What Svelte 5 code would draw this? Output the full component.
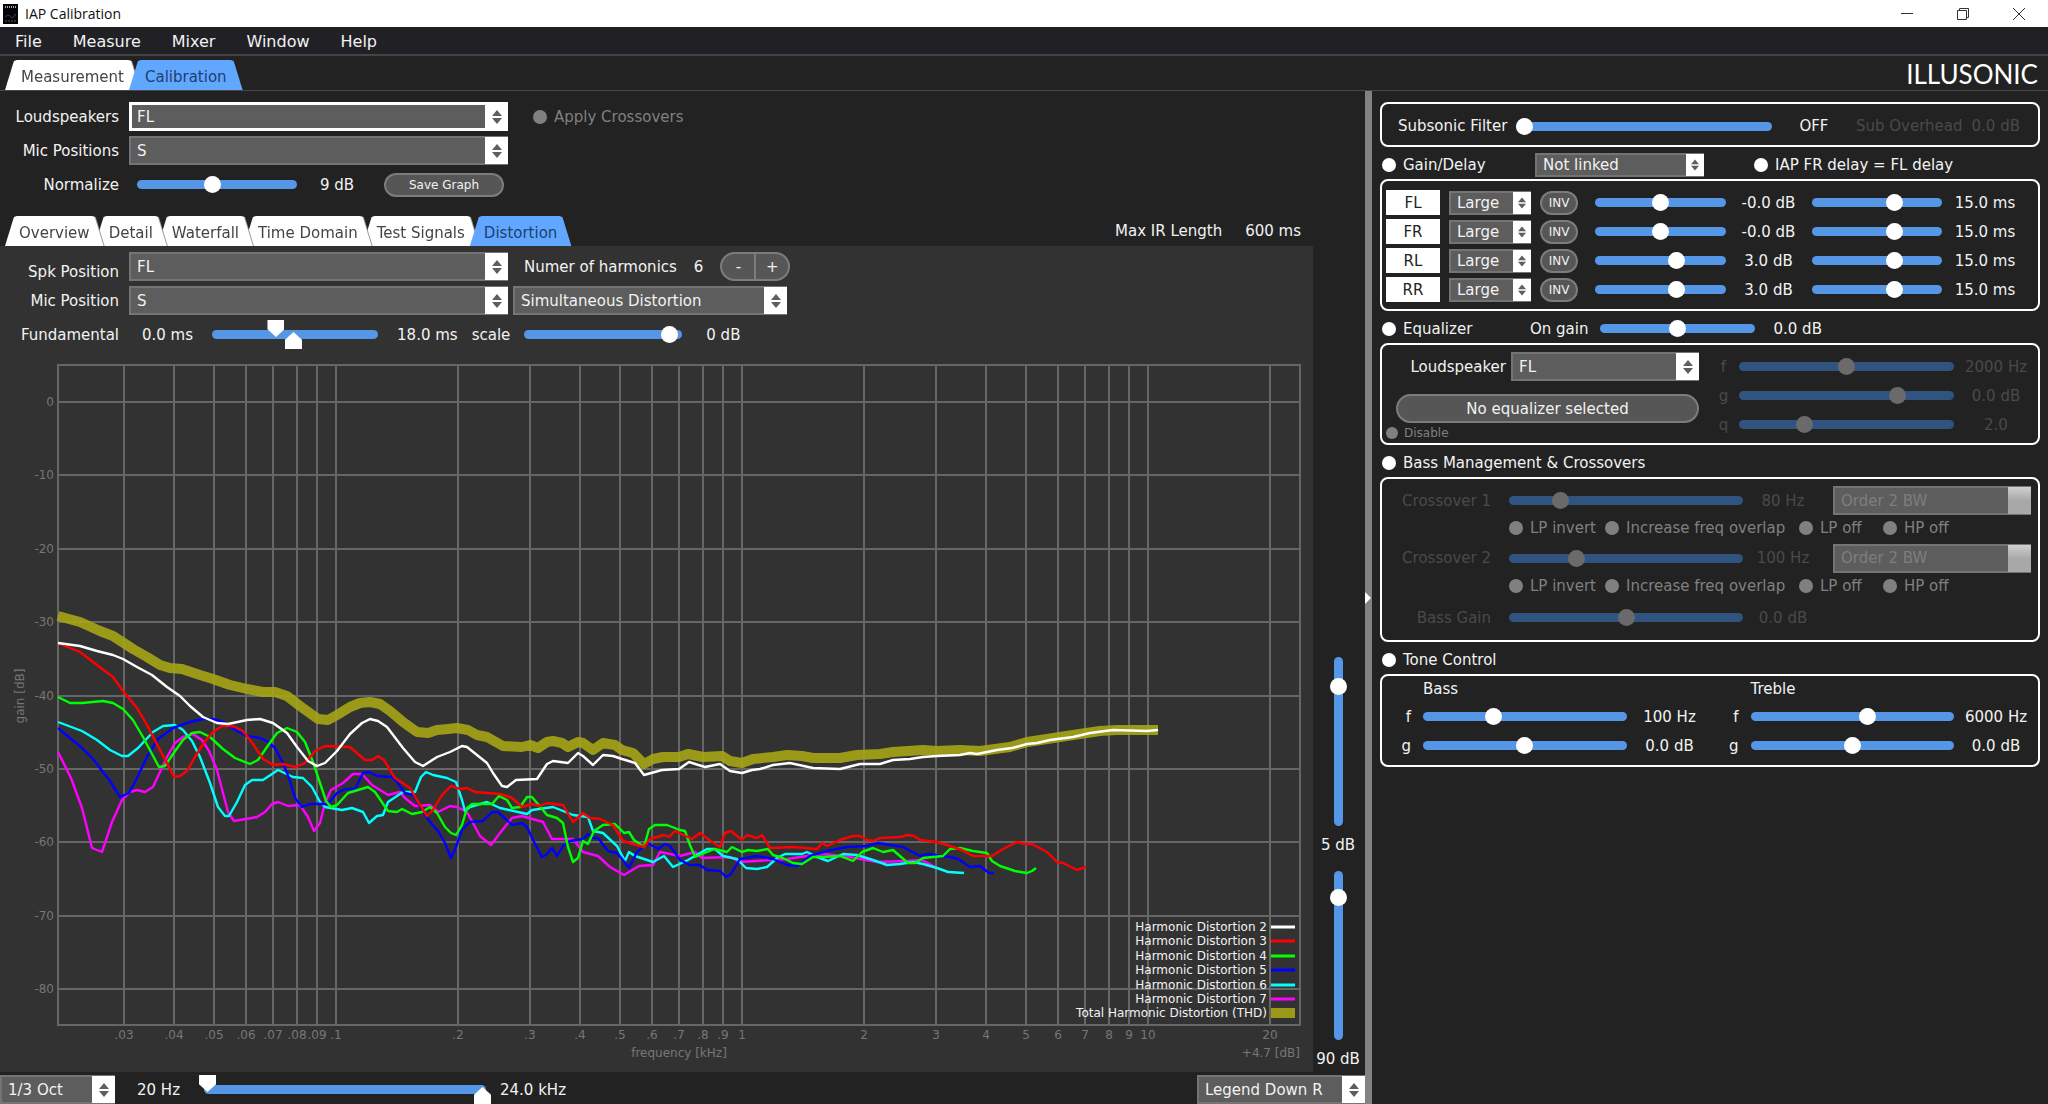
<script lang="ts">
  type Series = { name: string; color: string; points: string };

  const menu = ['File', 'Measure', 'Mixer', 'Window', 'Help'];
  const mainTabs = ['Measurement', 'Calibration'];
  const viewTabs = ['Overview', 'Detail', 'Waterfall', 'Time Domain', 'Test Signals', 'Distortion'];

  let mainTab = $state('Calibration');
  let viewTab = $state('Distortion');
  let harmonics = $state(6);

  const channels = [
    { name: 'FL', gain: 50, gainText: '-0.0 dB', delay: 66, delayText: '15.0 ms' },
    { name: 'FR', gain: 50, gainText: '-0.0 dB', delay: 66, delayText: '15.0 ms' },
    { name: 'RL', gain: 64, gainText: '3.0 dB', delay: 66, delayText: '15.0 ms' },
    { name: 'RR', gain: 64, gainText: '3.0 dB', delay: 66, delayText: '15.0 ms' },
  ];

  const eqParams = [
    { name: 'f', value: 50, text: '2000 Hz' },
    { name: 'g', value: 76, text: '0.0 dB' },
    { name: 'q', value: 29, text: '2.0' },
  ];

  const crossovers = [
    { name: 'Crossover 1', value: 20, text: '80 Hz' },
    { name: 'Crossover 2', value: 27, text: '100 Hz' },
  ];
  const crossoverFlags = ['LP invert', 'Increase freq overlap', 'LP off', 'HP off'];

  const tone = [
    { name: 'f', bass: 33, bassText: '100 Hz', treble: 58, trebleText: '6000 Hz' },
    { name: 'g', bass: 50, bassText: '0.0 dB', treble: 50, trebleText: '0.0 dB' },
  ];

  // Plot area in svg units
  const plot = { left: 58, right: 1300, top: 365, bottom: 1025 };
  const freqX = (khz: number) => Math.round(336 + 406 * Math.log10(khz / 0.1));
  const gainY = (db: number) => Math.round(402 - 7.34 * db);

  const freqs = [
    0.03, 0.04, 0.05, 0.06, 0.07, 0.08, 0.09, 0.1, 0.2, 0.3, 0.4, 0.5, 0.6, 0.7, 0.8, 0.9,
    1, 2, 3, 4, 5, 6, 7, 8, 9, 10, 20,
  ];
  const gains = [0, -10, -20, -30, -40, -50, -60, -70, -80];
  const freqLabel = (khz: number) => String(khz).replace(/^0/, '');

  const thd =
    '58,616 80,622 100,631 113,636 133,649 147,657 160,665 170,668 182,669 200,675 213,679 230,685 247,689 263,692 275,692 287,696 300,706 318,719 328,720 337,715 350,707 360,703 370,702 380,704 390,711 403,722 417,732 428,733 437,730 448,729 457,728 468,730 477,735 487,737 503,746 522,747 530,745 538,748 547,742 553,741 562,743 568,747 578,742 583,743 593,750 603,743 615,745 622,750 633,753 644,764 653,759 663,757 679,757 688,754 703,757 722,756 730,761 742,763 753,759 773,757 787,755 802,756 813,758 840,758 857,755 880,754 893,752 923,750 937,751 960,750 980,751 1010,747 1027,742 1047,739 1073,735 1100,731 1117,730 1140,730 1158,730';

  const series: Series[] = [
    {
      name: 'Harmonic Distortion 2',
      color: '#ffffff',
      points:
        '58,643 80,646 97,651 113,655 123,659 137,667 152,675 167,687 180,696 190,706 203,717 217,723 228,724 247,720 260,719 273,723 287,733 297,747 308,761 317,766 325,763 337,751 350,734 362,723 370,719 378,721 387,727 403,748 415,762 423,766 437,757 450,752 462,746 467,747 477,755 487,763 493,773 502,786 507,787 516,780 537,779 547,764 553,761 568,763 578,753 583,756 593,765 603,755 613,756 622,759 635,763 644,775 662,770 679,769 689,762 705,767 720,764 730,771 742,773 752,770 760,769 773,765 790,763 813,768 840,769 860,764 880,764 893,760 910,759 923,757 937,756 960,755 970,753 977,754 997,750 1012,748 1027,744 1037,743 1050,740 1073,737 1090,733 1113,730 1147,731 1158,730',
    },
    {
      name: 'Harmonic Distortion 3',
      color: '#ff0000',
      points:
        '58,643 80,652 97,665 113,677 123,691 137,708 147,725 160,750 167,763 174,777 180,776 187,771 195,757 203,744 213,732 222,726 233,726 243,731 253,744 263,759 273,765 283,764 295,767 305,763 315,751 325,746 350,747 365,760 372,760 378,756 384,760 395,778 410,788 418,802 427,816 433,810 442,795 451,786 460,789 467,788 475,792 500,794 512,798 522,807 532,804 540,806 547,803 563,805 573,822 583,813 590,818 600,819 613,825 623,841 633,844 644,847 650,839 664,835 669,837 675,831 692,839 700,833 712,842 720,847 725,833 731,831 742,840 747,835 757,838 762,835 770,848 793,847 817,849 822,843 827,846 840,840 853,836 860,836 867,840 873,841 880,838 900,837 908,835 914,836 920,840 937,842 950,846 962,850 973,856 992,856 1003,849 1017,842 1025,844 1032,844 1047,852 1057,862 1063,863 1077,870 1086,867',
    },
    {
      name: 'Harmonic Distortion 4',
      color: '#00ff00',
      points:
        '58,697 70,703 82,703 103,701 113,703 123,709 133,720 143,737 152,754 159,767 165,766 173,754 183,740 192,733 200,732 210,737 223,749 235,758 250,764 258,760 267,747 277,733 287,728 297,732 305,742 313,762 320,783 326,801 331,807 337,805 348,793 368,787 375,792 388,811 397,812 402,809 412,814 422,812 430,807 437,813 445,827 451,833 456,835 462,825 467,808 472,804 492,804 499,796 507,800 512,808 520,807 527,797 532,797 547,815 557,818 563,823 568,847 573,862 578,858 583,841 588,844 594,831 603,825 615,824 624,833 629,832 634,840 644,847 649,829 655,825 667,825 680,830 685,831 690,845 695,857 707,852 715,849 727,852 732,847 742,852 748,850 757,851 768,849 773,855 783,858 793,863 802,864 813,857 823,857 840,856 853,861 862,852 873,848 883,852 893,850 908,863 915,863 923,858 943,856 950,849 960,848 973,851 987,853 992,861 1000,866 1015,871 1027,873 1032,871 1036,868',
    },
    {
      name: 'Harmonic Distortion 5',
      color: '#0000ff',
      points:
        '58,728 70,738 82,748 93,759 110,781 120,797 129,793 137,778 147,757 158,739 173,728 190,722 203,719 213,719 223,722 237,731 247,736 260,738 267,741 275,748 283,763 289,778 295,798 302,807 310,804 328,804 337,793 345,789 355,789 363,773 369,772 377,776 392,777 397,782 405,793 413,795 422,810 430,822 438,831 445,843 451,858 456,847 462,830 470,822 483,821 492,812 498,812 512,825 522,823 527,827 533,840 542,857 547,854 552,848 557,856 563,846 570,841 583,839 588,834 593,838 598,838 608,851 617,853 623,860 629,868 637,852 648,843 658,849 665,844 670,846 680,860 690,865 700,865 707,870 720,871 726,877 731,874 740,859 757,856 773,859 787,865 797,866 805,860 810,856 827,851 847,847 867,846 878,843 903,847 920,856 928,854 950,857 958,859 970,867 980,866 989,873 994,873',
    },
    {
      name: 'Harmonic Distortion 6',
      color: '#00ffff',
      points:
        '58,722 82,731 97,740 110,750 122,756 128,756 138,748 153,732 163,726 175,725 183,730 192,741 200,757 210,783 218,807 225,816 229,816 237,802 245,785 252,780 263,780 278,770 293,777 303,778 312,787 320,802 325,807 342,810 352,808 363,812 369,823 377,816 383,815 388,802 403,792 415,792 421,777 426,772 433,775 447,778 456,782 462,800 465,811 470,807 487,802 500,808 527,814 532,810 553,807 573,815 588,817 593,831 603,833 617,846 625,861 629,852 635,856 653,862 664,856 673,867 688,860 707,849 715,849 723,856 737,859 746,868 757,869 767,867 777,858 785,854 802,854 807,852 817,857 828,861 843,854 857,855 873,860 887,865 900,864 913,862 923,864 937,868 948,872 964,873',
    },
    {
      name: 'Harmonic Distortion 7',
      color: '#ff00ff',
      points:
        '58,752 71,778 82,808 92,848 102,852 112,822 122,800 130,792 137,790 145,792 153,787 160,772 167,757 175,743 183,737 193,734 202,740 209,751 217,770 223,793 228,812 234,821 257,817 265,812 272,804 278,802 288,806 300,805 308,817 314,831 320,823 325,803 331,790 343,783 353,774 362,774 372,785 388,795 400,792 405,798 415,806 430,805 438,812 450,806 457,807 467,812 480,836 491,845 500,833 512,818 522,816 543,822 552,839 573,839 583,852 598,856 610,867 624,875 639,866 653,865 660,852 680,856 695,852 702,858 730,857 740,862 773,860 787,859 800,857 823,854 850,857 877,862 907,861 922,860 937,868',
    },
  ];
  const drawOrder = [...series].reverse();
  const legendY = (i: number) => Math.round(927 + 14.4 * i);
</script>

{#snippet dropdown(id: string, value: string, cls: string, disabled: boolean, label: string | undefined)}
  <span class="dropdown {cls}" class:disabled>
    <select {id} {disabled} aria-label={label}>
      <option>{value}</option>
    </select>
    <span class="stub">
      {#if !disabled}
        <svg width="10" height="14" viewBox="0 0 10 14" aria-hidden="true">
          <path d="M5 0 10 6H0zM5 14 0 8h10z" />
        </svg>
      {/if}
    </span>
  </span>
{/snippet}

{#snippet slider(label: string, value: number, cls = '', disabled = false)}
  <input type="range" class={cls} min="0" max="100" {value} {disabled} aria-label={label} />
{/snippet}

{#snippet rangePair(label: string, low: number, high: number, cls: string)}
  <span class="pair {cls}">
    <input type="range" class="from" min="0" max="100" value={low} aria-label="{label} from" />
    <input type="range" class="to" min="0" max="100" value={high} aria-label="{label} to" />
  </span>
{/snippet}

{#snippet check(text: string, cls = '', disabled = false)}
  <label class="check {cls}" class:disabled>
    <input type="checkbox" {disabled} />
    <span>{text}</span>
  </label>
{/snippet}

{#snippet tab(name: string, i: number, active: boolean, onclick: () => void)}
  <button class="tab" class:active role="tab" aria-selected={active} style:z-index={active ? 10 : 9 - i} {onclick}>
    <span>{name}</span>
  </button>
{/snippet}

<div class="app">
  <header class="titlebar">
    <svg width="15" height="20" viewBox="0 0 15 20" aria-hidden="true">
      <rect width="15" height="20" fill="#050505" />
      <path d="M2 3h11" stroke="#aaa" stroke-dasharray="1 1" stroke-width="2" />
      <path d="M2 13c2-1 3-3 5-1s3 3 5-1l1-1" fill="none" stroke="#2a4a90" />
      <path d="M2 17h11" stroke="#555" stroke-dasharray="2 1" />
    </svg>
    <span class="title">IAP Calibration</span>
    <div class="window-buttons">
      <button aria-label="Minimize">
        <svg width="12" height="12" viewBox="0 0 12 12"><path d="M0 5.5h12" /></svg>
      </button>
      <button aria-label="Restore">
        <svg width="12" height="12" viewBox="0 0 12 12"><path d="M.5 2.500h9v9h-9zM2.500 2.500v-2h9v9h-2" /></svg>
      </button>
      <button aria-label="Close">
        <svg width="12" height="12" viewBox="0 0 12 12"><path d="M0 0l12 12M12 0 0 12" /></svg>
      </button>
    </div>
  </header>

  <nav class="menu">
    {#each menu as item}
      <button>{item}</button>
    {/each}
  </nav>

  <div class="topbar">
    <div class="tabs wide" role="tablist">
      {#each mainTabs as name, i}
        {@render tab(name, i, mainTab === name, () => (mainTab = name))}
      {/each}
    </div>
    <span class="brand">ILLUSONIC</span>
  </div>

  <div class="body">
    <main>
      <section class="form">
        <div class="row">
          <label class="name" for="loudspeakers">Loudspeakers</label>
          {@render dropdown('loudspeakers', 'FL', 'long focused', false, undefined)}
          {@render check('Apply Crossovers', 'apply', true)}
        </div>
        <div class="row">
          <label class="name" for="mic-positions">Mic Positions</label>
          {@render dropdown('mic-positions', 'S', 'long', false, undefined)}
        </div>
        <div class="row">
          <span class="name">Normalize</span>
          <span class="slot">
            {@render slider('Normalize', 47, 'w160')}
            <output class="norm">9 dB</output>
            <button class="pill save">Save Graph</button>
          </span>
        </div>
      </section>

      <div class="view-head">
        <div class="tabs" role="tablist">
          {#each viewTabs as name, i}
            {@render tab(name, i, viewTab === name, () => (viewTab = name))}
          {/each}
        </div>
        <span>Max IR Length</span>
        <output>600 ms</output>
      </div>

      <div class="view">
        <section class="panel">
          <div class="row">
            <label class="name low" for="spk-position">Spk Position</label>
            {@render dropdown('spk-position', 'FL', 'long', false, undefined)}
            <span class="harmonics">
              <span>Numer of harmonics</span>
              <output>{harmonics}</output>
              <span class="stepper">
                <button aria-label="Fewer harmonics" onclick={() => harmonics--}>-</button>
                <button aria-label="More harmonics" onclick={() => harmonics++}>+</button>
              </span>
            </span>
          </div>
          <div class="row">
            <label class="name" for="mic-position">Mic Position</label>
            {@render dropdown('mic-position', 'S', 'long', false, undefined)}
            {@render dropdown('mode', 'Simultaneous Distortion', 'mode', false, 'Distortion mode')}
          </div>
          <div class="row">
            <span class="name">Fundamental</span>
            <span class="fundamental">
              <output>0.0 ms</output>
              {@render rangePair('Fundamental', 38, 49, 'w176')}
              <output>18.0 ms</output>
              <span>scale</span>
              {@render slider('scale', 97, 'w160')}
              <output class="after">0 dB</output>
            </span>
          </div>

          <svg class="chart" viewBox="0 349 1313 723" role="img" aria-label="Distortion over frequency">
            <g class="grid">
              {#each gains as db}
                <path d="M{plot.left} {gainY(db)}H{plot.right}" />
              {/each}
              {#each freqs as khz}
                <path d="M{freqX(khz)} {plot.top}V{plot.bottom}" />
              {/each}
              <rect
                x={plot.left}
                y={plot.top}
                width={plot.right - plot.left}
                height={plot.bottom - plot.top}
              />
            </g>

            <g class="axis">
              {#each gains as db}
                <text x="54" y={gainY(db) + 4} text-anchor="end">{db}</text>
              {/each}
              {#each freqs as khz}
                <text x={freqX(khz)} y="1039" text-anchor="middle">{freqLabel(khz)}</text>
              {/each}
              <text x="679" y="1057" text-anchor="middle">frequency [kHz]</text>
              <text x="1300" y="1057" text-anchor="end">+4.7 [dB]</text>
              <text transform="translate(24 696) rotate(-90)" text-anchor="middle">gain [dB]</text>
            </g>

            <polyline class="thd" points={thd} />
            {#each drawOrder as s}
              <polyline class="curve" points={s.points} stroke={s.color} />
            {/each}

            <g class="legend">
              {#each series as s, i}
                <text x="1267" y={legendY(i) + 4} text-anchor="end">{s.name}</text>
                <path d="M1271 {legendY(i)}h24" stroke={s.color} stroke-width="3" />
              {/each}
              <text x="1267" y={legendY(6) + 4} text-anchor="end">Total Harmonic Distortion (THD)</text>
              <path class="thd" d="M1271 {legendY(6)}h24" />
            </g>
          </svg>
        </section>

        <aside class="levels">
          {@render slider('Maximum level', 86, 'vertical')}
          <output>5 dB</output>
          {@render slider('Level range', 88, 'vertical')}
          <output>90 dB</output>
        </aside>
      </div>

      <footer class="bottom">
        {@render dropdown('smoothing', '1/3 Oct', 'oct', false, 'Smoothing')}
        <output class="low-freq">20 Hz</output>
        {@render rangePair('Frequency', 0, 100, 'w292')}
        <output>24.0 kHz</output>
        {@render dropdown('legend', 'Legend Down R', 'legend-pos', false, 'Legend position')}
      </footer>
    </main>

    <div class="splitter">
      <svg width="6" height="12" viewBox="0 0 6 12" aria-hidden="true"><path d="M0 0 6 6 0 12z" fill="#fff" /></svg>
    </div>

    <aside class="settings">
      <section class="box subsonic">
        <span>Subsonic Filter</span>
        {@render slider('Subsonic Filter', 0)}
        <output class="state">OFF</output>
        <span class="dim">Sub Overhead</span>
        <output class="dim">0.0 dB</output>
      </section>

      <div class="head">
        {@render check('Gain/Delay', 'lead')}
        {@render dropdown('linking', 'Not linked', 'small linking', false, 'Linking')}
        {@render check('IAP FR delay = FL delay')}
      </div>
      <section class="box channels">
        {#each channels as ch}
          <button class="channel">{ch.name}</button>
          {@render dropdown(`size-${ch.name}`, 'Large', 'small', false, `${ch.name} size`)}
          <button class="pill inv">INV</button>
          {@render slider(`${ch.name} gain`, ch.gain)}
          <output>{ch.gainText}</output>
          {@render slider(`${ch.name} delay`, ch.delay)}
          <output>{ch.delayText}</output>
        {/each}
      </section>

      <div class="head">
        {@render check('Equalizer', 'lead narrow')}
        <span>On gain</span>
        {@render slider('On gain', 50, 'on-gain')}
        <output>0.0 dB</output>
      </div>
      <section class="box equalizer">
        <div class="eq-left">
          <div class="eq-speaker">
            <label for="eq-speaker">Loudspeaker</label>
            {@render dropdown('eq-speaker', 'FL', 'eq-select', false, undefined)}
          </div>
          <button class="pill eq-button">No equalizer selected</button>
          {@render check('Disable', 'tiny', true)}
        </div>
        <div class="eq-right dim">
          {#each eqParams as p}
            <span>{p.name}</span>
            {@render slider(`Equalizer ${p.name}`, p.value, '', true)}
            <output>{p.text}</output>
          {/each}
        </div>
      </section>

      <div class="head">
        {@render check('Bass Management & Crossovers')}
      </div>
      <section class="box crossovers dim">
        {#each crossovers as c, i}
          <span class="cross-name">{c.name}</span>
          {@render slider(c.name, c.value, '', true)}
          <output>{c.text}</output>
          {@render dropdown(`order-${i}`, 'Order 2 BW', 'order', true, `${c.name} order`)}
          <div class="flags">
            {#each crossoverFlags as flag}
              {@render check(flag, '', true)}
            {/each}
          </div>
        {/each}
        <span class="cross-name">Bass Gain</span>
        {@render slider('Bass Gain', 50, '', true)}
        <output>0.0 dB</output>
      </section>

      <div class="head">
        {@render check('Tone Control')}
      </div>
      <section class="box tone">
        <span class="tone-title">Bass</span>
        <span class="tone-title treble">Treble</span>
        {#each tone as t}
          <span class="letter">{t.name}</span>
          {@render slider(`Bass ${t.name}`, t.bass)}
          <output>{t.bassText}</output>
          <span class="letter">{t.name}</span>
          {@render slider(`Treble ${t.name}`, t.treble)}
          <output>{t.trebleText}</output>
        {/each}
      </section>
    </aside>
  </div>
</div>

<style>
  :global(body) {
    background: #222;
  }

  .app {
    display: flex;
    flex-direction: column;
    min-height: 100vh;
    background: #222;
    color: #f2f2f2;
    font-family: 'DejaVu Sans', Verdana, sans-serif;
    font-size: 15px;
    line-height: 18px;
    white-space: nowrap;
  }

  .app *,
  .app *::before {
    box-sizing: border-box;
  }

  button,
  select {
    margin: 0;
    padding: 0;
    border: 0;
    background: none;
    color: inherit;
    font: inherit;
  }

  /* window chrome */
  .titlebar {
    display: flex;
    align-items: center;
    height: 27px;
    padding: 0 1px 0 3px;
    gap: 7px;
    background: #fff;
    color: #111;
  }

  .title {
    flex: 1;
    font: 14px/20px 'Open Sans', 'Noto Sans', sans-serif;
  }

  .window-buttons {
    display: flex;
  }

  .window-buttons button {
    display: flex;
    align-items: center;
    justify-content: center;
    width: 56px;
    height: 27px;
  }

  .window-buttons path {
    fill: none;
    stroke: #333;
  }

  .menu {
    display: flex;
    align-items: center;
    gap: 31px;
    height: 27px;
    padding: 3px 15px 0;
    background: #212125;
    font-size: 16px;
  }

  .topbar {
    display: flex;
    align-items: flex-end;
    justify-content: space-between;
    height: 37px;
    padding-right: 10px;
    border-top: 2px solid #444;
    border-bottom: 1px solid #484848;
  }

  .brand {
    color: #fff;
    font: 26px/32px 'Liberation Sans Narrow', Lato, sans-serif;
  }

  /* tabs */
  .tabs {
    display: flex;
    isolation: isolate;
    padding-left: 5px;
  }

  .tab {
    position: relative;
    height: 30px;
    padding: 3px 14px 0;
    color: #444;
    filter: drop-shadow(1px 0 0 #999);
  }

  .tab + .tab {
    margin-left: -9px;
  }

  .tab::before {
    content: '';
    position: absolute;
    inset: 0;
    background: #fff;
    clip-path: polygon(0 100%, 8px 4px, 9px 1px, 12px 0, calc(100% - 12px) 0, calc(100% - 9px) 1px, calc(100% - 8px) 4px, 100% 100%);
  }

  .tab span {
    position: relative;
  }

  .tab.active {
    color: #1d3f6e;
    filter: none;
  }

  .tab.active::before {
    background: #62a7ff;
  }

  .wide .tab {
    padding: 3px 16px 0;
  }

  .wide .tab + .tab {
    margin-left: -11px;
  }

  .body {
    flex: 1;
    display: grid;
    grid-template-columns: minmax(0, 1fr) 7px 676px;
  }

  main {
    display: flex;
    flex-direction: column;
  }

  .splitter {
    display: flex;
    align-items: center;
    background: #828282;
  }

  /* form rows */
  .form {
    display: flex;
    flex-direction: column;
    gap: 5px;
    padding: 11px 0 17px;
  }

  .row {
    display: flex;
    align-items: center;
    height: 29px;
  }

  .name {
    width: 119px;
    margin-right: 10px;
    text-align: right;
  }

  .name.low {
    align-self: flex-end;
  }

  .slot {
    display: flex;
    align-items: center;
    padding-left: 8px;
  }

  .w160 {
    width: 160px;
  }

  .w176 {
    width: 176px;
  }

  .w292 {
    width: 292px;
  }

  .norm {
    width: 80px;
    margin-right: 7px;
    text-align: center;
  }

  .pill {
    border: 2px solid #7c7c7c;
    border-radius: 15px;
    background: #565656;
  }

  .save {
    width: 120px;
    height: 24px;
    font-size: 12px;
  }

  /* drop-downs */
  .dropdown {
    position: relative;
    display: block;
    height: 29px;
  }

  .dropdown select {
    appearance: none;
    width: 100%;
    height: 100%;
    padding: 0 26px 0 6px;
    border: 2px solid #747474;
    background: #5d5d5d;
  }

  .stub {
    position: absolute;
    top: 1px;
    right: 0;
    bottom: 1px;
    display: flex;
    align-items: center;
    justify-content: center;
    width: 23px;
    background: #fff;
    fill: #5e5e5e;
    pointer-events: none;
  }

  .small {
    height: 24px;
  }

  .small .stub {
    width: 18px;
  }

  .small .stub svg {
    width: 8px;
    height: 14px;
  }

  .dropdown.small select {
    padding-right: 18px;
  }

  .dropdown.focused select {
    padding-left: 5px;
    border: 3px solid #fff;
  }

  .dropdown.disabled select {
    color: #7e7e7e;
    opacity: 1;
  }

  .disabled .stub {
    background: linear-gradient(#d0d0d0, #a8a8a8 50%);
  }

  .long {
    width: 379px;
  }

  .mode {
    width: 274px;
    margin-left: 5px;
  }

  .oct {
    width: 115px;
  }

  .legend-pos {
    width: 168px;
    margin-left: auto;
  }

  .order {
    justify-self: end;
    width: 198px;
  }

  .linking {
    width: 169px;
    margin-right: 43px;
  }

  .eq-select {
    width: 188px;
  }

  /* sliders */
  input[type='range'] {
    appearance: none;
    height: 17px;
    min-width: 0;
    margin: 0;
    background: none;
  }

  input::-webkit-slider-runnable-track {
    height: 9px;
    border-radius: 5px;
    background: #5696e6;
  }

  input::-webkit-slider-thumb {
    appearance: none;
    width: 17px;
    height: 17px;
    margin-top: -4px;
    border-radius: 50%;
    background: #fff;
  }

  input:disabled::-webkit-slider-runnable-track {
    background: #30547f;
  }

  input:disabled::-webkit-slider-thumb {
    background: #6a6a6a;
  }

  .vertical {
    writing-mode: vertical-lr;
    direction: rtl;
  }

  input[type='range'].vertical {
    width: 17px;
    height: 169px;
  }

  .vertical::-webkit-slider-runnable-track {
    width: 9px;
    height: 100%;
  }

  .vertical::-webkit-slider-thumb {
    margin: 0 0 0 -4px;
  }

  .pair {
    display: grid;
    align-items: center;
    height: 29px;
  }

  .pair::before {
    content: '';
    grid-area: 1 / 1;
    height: 9px;
    margin: 0 5px;
    border-radius: 5px;
    background: #5696e6;
  }

  .pair input {
    grid-area: 1 / 1;
    width: 100%;
    pointer-events: none;
  }

  .pair input[type='range'] {
    height: 29px;
  }

  .pair input::-webkit-slider-runnable-track {
    height: 29px;
    background: none;
  }

  .pair input::-webkit-slider-thumb {
    margin-top: 0;
    border-radius: 0;
    clip-path: polygon(0 0, 100% 0, 100% 55%, 50% 100%, 0 55%);
    pointer-events: auto;
  }

  .pair .to::-webkit-slider-thumb {
    margin-top: 12px;
    clip-path: polygon(0 100%, 100% 100%, 100% 45%, 50% 0, 0 45%);
  }

  /* tick boxes */
  .check {
    display: flex;
    align-items: center;
    gap: 7px;
  }

  .check input {
    appearance: none;
    width: 14px;
    height: 14px;
    margin: 0;
    border-radius: 50%;
    background: #fff;
  }

  .check.disabled {
    color: #808080;
  }

  .check.disabled input {
    background: #808080;
  }

  .apply {
    margin-left: 25px;
  }

  .tiny {
    gap: 6px;
    padding-top: 1px;
    font-size: 12px;
  }

  .tiny input {
    width: 12px;
    height: 12px;
  }

  /* distortion view */
  .view-head {
    display: flex;
    align-items: center;
    gap: 23px;
    padding-right: 64px;
  }

  .view-head .tabs {
    flex: 1;
  }

  .view {
    display: grid;
    grid-template-columns: minmax(0, 1fr) 52px;
  }

  .panel {
    display: flex;
    flex-direction: column;
    padding-top: 6px;
    background: #323232;
  }

  .panel .row {
    margin-bottom: 5px;
  }

  .panel .row:nth-child(3) {
    margin-bottom: 0;
  }

  .harmonics {
    display: flex;
    align-items: center;
    gap: 17px;
    padding-left: 16px;
  }

  .stepper {
    display: flex;
    width: 70px;
    height: 29px;
    overflow: hidden;
    border: 2px solid #7c7c7c;
    border-radius: 15px;
    background: #565656;
  }

  .stepper button {
    flex: 1;
  }

  .stepper button + button {
    border-left: 2px solid #7c7c7c;
  }

  .fundamental {
    display: flex;
    align-items: center;
    gap: 14px;
    padding-left: 13px;
  }

  .fundamental .w160 {
    width: 158px;
  }

  .after {
    padding-left: 10px;
  }

  .chart {
    display: block;
    width: 100%;
    font-size: 12px;
  }

  .grid {
    fill: none;
    stroke: #666;
    stroke-width: 2;
  }

  .axis {
    fill: #777;
  }

  .curve {
    fill: none;
    stroke-width: 2.4;
    stroke-linejoin: round;
  }

  .thd {
    fill: none;
    stroke: #a8a814;
    stroke-opacity: 0.88;
    stroke-width: 10;
    stroke-linejoin: round;
  }

  .legend {
    fill: #f2f2f2;
  }

  .levels {
    display: flex;
    flex-direction: column;
    align-items: center;
    justify-content: flex-end;
    padding: 0 2px 4px 0;
  }

  .levels output {
    margin-top: 10px;
  }

  .levels output + input {
    margin-top: 17px;
  }

  .bottom {
    display: flex;
    align-items: center;
    gap: 9px;
    margin-top: auto;
    padding-top: 3px;
  }

  .low-freq {
    padding: 0 10px 0 13px;
  }

  /* right side */
  .settings {
    padding: 11px 8px;
  }

  .box {
    border: 2px solid #fff;
    border-radius: 8px;
  }

  .dim {
    color: #4a4a4a;
  }

  .subsonic {
    display: flex;
    align-items: center;
    gap: 9px;
    height: 45px;
    padding: 3px 18px 0 16px;
  }

  .subsonic input {
    flex: 1;
  }

  .state {
    width: 66px;
    text-align: center;
  }

  .head {
    display: flex;
    align-items: center;
    gap: 7px;
    height: 32px;
    padding: 3px 2px 0;
  }

  .lead {
    width: 146px;
  }

  .lead.narrow {
    width: 141px;
  }

  .head .on-gain {
    width: 155px;
    margin: 0 11px 0 5px;
  }

  .channels {
    display: grid;
    grid-template-columns: 54px 82px 46px 1fr 68px 1fr 68px;
    gap: 4px 9px;
    align-items: center;
    padding: 9px 19px 7px 4px;
  }

  .channels output,
  .eq-right output,
  .crossovers output,
  .tone output {
    text-align: center;
  }

  .channel {
    height: 25px;
    background: #fff;
    color: #222;
  }

  .inv {
    width: 38px;
    height: 24px;
    font-size: 12px;
  }

  .equalizer {
    display: flex;
    gap: 16px;
    height: 102px;
    padding: 7px 7px 0 4px;
  }

  .eq-left {
    width: 313px;
  }

  .eq-speaker {
    display: flex;
    align-items: center;
    justify-content: flex-end;
    gap: 5px;
    margin-bottom: 13px;
  }

  .eq-button {
    width: 303px;
    height: 29px;
    margin-left: 10px;
  }

  .eq-right {
    flex: 1;
    display: grid;
    grid-template-columns: 17px 1fr 70px;
    grid-auto-rows: 29px;
    column-gap: 7px;
    align-items: center;
    text-align: center;
  }

  .crossovers {
    display: grid;
    grid-template-columns: 127px 1fr 80px 208px;
    grid-template-rows: 29px 28px 30px 28px 33px;
    align-items: center;
    padding: 7px 7px 6px 0;
  }

  .cross-name {
    padding-right: 18px;
    text-align: right;
  }

  .flags {
    grid-column: 2 / -1;
    display: grid;
    grid-template-columns: 96px 194px 84px auto;
    padding-bottom: 2px;
  }

  .tone {
    display: grid;
    grid-template-columns: 41px 1fr 86px 38px 1fr 84px;
    grid-template-rows: 26px 29px 29px;
    align-items: center;
    padding-bottom: 5px;
  }

  .tone-title {
    grid-column: 2 / 5;
  }

  .tone-title.treble {
    grid-column: 5 / -1;
  }

  .letter {
    padding-right: 12px;
    text-align: right;
  }
</style>
